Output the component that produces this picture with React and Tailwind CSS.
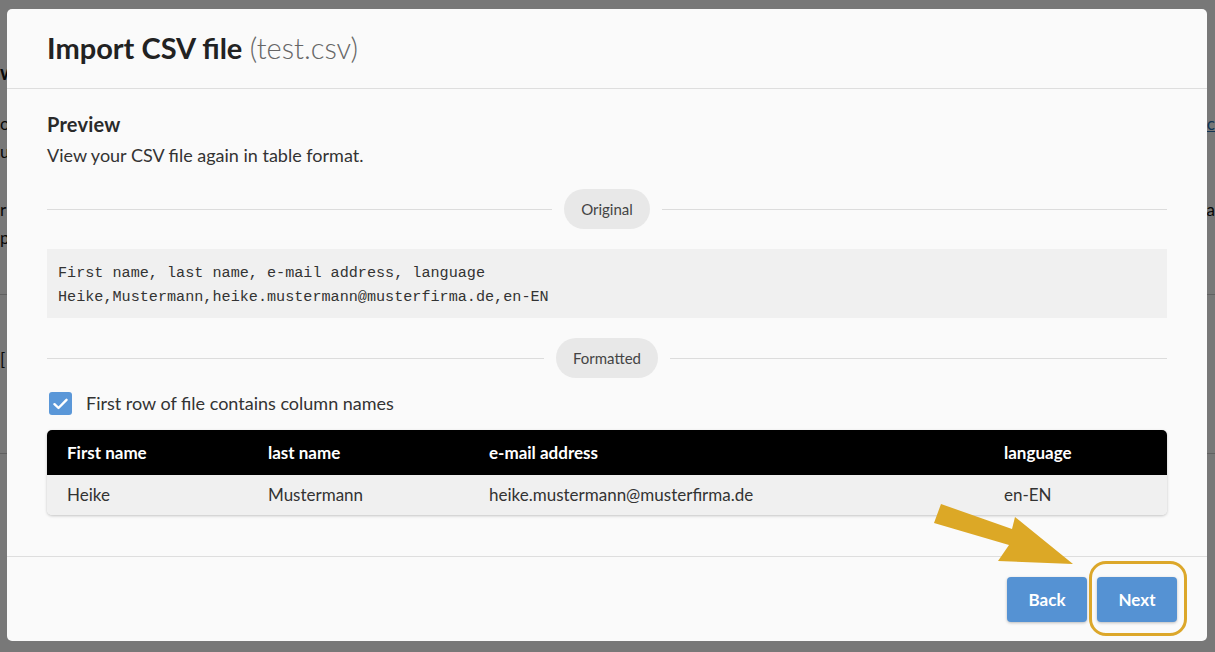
import React, { useState } from 'react';

const columns = ['First name', 'last name', 'e-mail address', 'language'];
const row = ['Heike', 'Mustermann', 'heike.mustermann@musterfirma.de', 'en-EN'];

const Divider = ({ label }) => (
    <div className="flex items-center gap-[12px]">
        <div className="flex-1 h-px bg-[#dcdcdc]"></div>
        <span className="h-10 px-[17px] rounded-full bg-[#e8e8e8] text-[#444] text-[15px] flex items-center">{label}</span>
        <div className="flex-1 h-px bg-[#dcdcdc]"></div>
    </div>
);

const App = () => {
    const [hasHeader, setHasHeader] = useState(true);

    return (
        <div className="relative w-[1215px] h-[652px] overflow-hidden bg-white font-['Lato',sans-serif]">
            {/* page behind the dialog */}
            <div className="flex flex-col text-[#111]">
                <div className="h-[60px]"></div>
                <div className="text-[20px] font-bold leading-6">w</div>
                <div className="h-[26px]"></div>
                <div className="flex justify-between text-[17px] leading-7">
                    <span>o</span>
                    <span className="text-[#2a6db0] underline">ac</span>
                </div>
                <div className="text-[17px] leading-7">u</div>
                <div className="h-[30px]"></div>
                <div className="flex justify-between text-[17px] leading-7">
                    <span>r</span>
                    <span>a</span>
                </div>
                <div className="text-[17px] leading-7">pe</div>
                <div className="h-[43px] border-b border-[#cfcfcf]"></div>
                <div className="h-[51px]"></div>
                <div className="text-[17px] leading-7">[</div>
                <div className="h-[80px] border-b border-[#cfcfcf]"></div>
            </div>
            <div className="absolute inset-0 bg-black/[0.53]"></div>

            {/* dialog */}
            <div className="absolute left-[7px] top-[9px] w-[1200px] h-[632px] rounded-[5px] bg-[#fafafa] flex flex-col">
                <div className="h-[80px] px-10 flex items-center border-b border-[#dedede]">
                    <h1 className="text-[29px] leading-none text-[#222] -mt-[3px]">
                        <span className="font-bold">Import CSV file</span>{' '}
                        <span className="font-light text-[#666]">(test.csv)</span>
                    </h1>
                </div>

                <div className="flex-1 px-10 pt-[22px] border-b border-[#dedede]">
                    <h2 className="text-[20px] leading-[26px] font-bold text-[#2a2a2a] tracking-[0.2px]">Preview</h2>
                    <p className="mt-[5px] text-[18px] leading-[26px] text-[#333]">View your CSV file again in table format.</p>

                    <div className="mt-[21px]">
                        <Divider label="Original" />
                    </div>

                    <div className="mt-5 bg-[#f0f0f0] pl-[11px] pt-[12px] pb-[9px] font-['Liberation_Mono',monospace] text-[15.15px] leading-6 text-[#333] whitespace-pre">
                        <div>First name, last name, e-mail address, language</div>
                        <div>Heike,Mustermann,heike.mustermann@musterfirma.de,en-EN</div>
                    </div>

                    <div className="mt-5">
                        <Divider label="Formatted" />
                    </div>

                    <label className="mt-[14px] ml-[2px] flex items-center gap-[14px] cursor-pointer">
                        <button
                            type="button"
                            onClick={() => setHasHeader(!hasHeader)}
                            className="w-[23px] h-[23px] rounded-[3px] bg-[#5a97d8] flex items-center justify-center"
                        >
                            {hasHeader && (
                                <svg width="15" height="12" viewBox="0 0 15 12" fill="none">
                                    <path d="M1.5 6.2 L5.5 10 L13.5 1.8" stroke="#fff" strokeWidth="2.4" strokeLinecap="round" strokeLinejoin="round" />
                                </svg>
                            )}
                        </button>
                        <span className="text-[18px] leading-[23px] text-[#333]">First row of file contains column names</span>
                    </label>

                    <div className="mt-[15px] rounded-[5px] overflow-hidden shadow-[0_1px_3px_rgba(0,0,0,0.22)]">
                        <div className="grid grid-cols-[201px_221px_515px_1fr] h-[45px] items-center bg-black text-white text-[17px] font-bold">
                            {columns.map(c => (
                                <span key={c} className="pl-5">{c}</span>
                            ))}
                        </div>
                        <div className="grid grid-cols-[201px_221px_515px_1fr] h-[40px] items-center bg-[#f0f0f0] text-[#333] text-[17px]">
                            {row.map(c => (
                                <span key={c} className="pl-5">{c}</span>
                            ))}
                        </div>
                    </div>
                </div>

                <div className="h-[84px] flex justify-end items-start gap-[10px] pt-5 pr-[30px]">
                    <button className="w-20 h-[45px] rounded-[4px] bg-[#5592d3] text-white text-[17px] font-bold shadow-[0_1px_3px_rgba(0,0,0,0.25)]">Back</button>
                    <button className="w-20 h-[45px] rounded-[4px] bg-[#5592d3] text-white text-[17px] font-bold shadow-[0_1px_3px_rgba(0,0,0,0.25)]">Next</button>
                </div>

                {/* annotation: ring + arrow */}
                <div className="absolute left-[1082px] top-[552px] w-[98px] h-[75px] rounded-[17px] border-[3px] border-[#dca72a] pointer-events-none"></div>
                <svg className="absolute left-0 top-0 pointer-events-none" width="1200" height="632" viewBox="7 9 1200 632">
                    <polygon points="941,504 1012,529 1015,517 1073,564 998,561 1009,545 934,523" fill="#dca826" />
                </svg>
            </div>
        </div>
    );
};

export default App;
